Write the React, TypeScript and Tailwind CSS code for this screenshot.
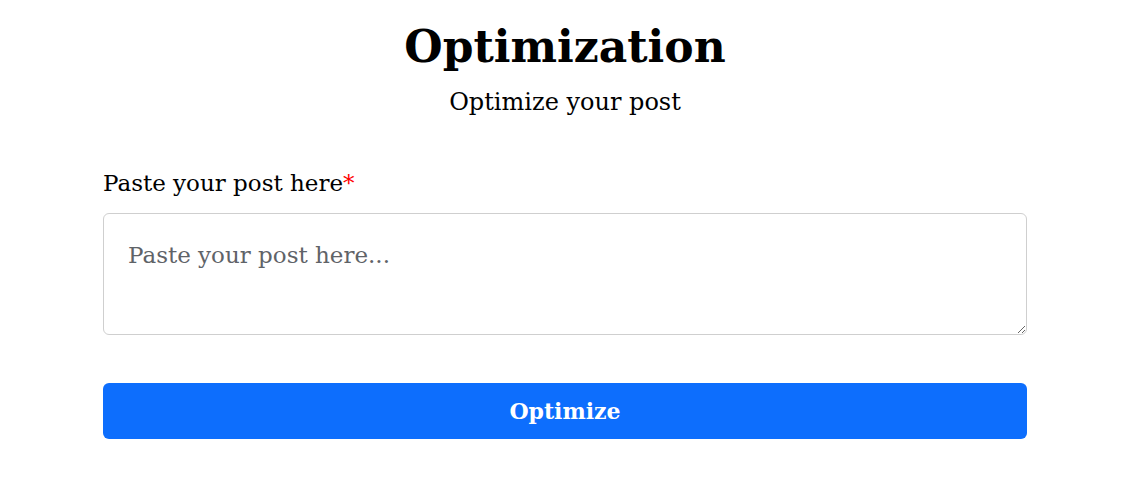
export default function App() {
  return (
    <div className="min-h-screen bg-white pl-[103px] pr-[99px] pt-[18px] font-['DejaVu_Serif',serif] text-black">
      <div className="flex flex-col items-center">
        <h1 className="text-[44px] font-bold leading-[58px]">Optimization</h1>
        <p className="mt-[12px] text-[24px] leading-[28px]">Optimize your post</p>
      </div>

      <form className="mt-[52px] flex flex-col" onSubmit={(e) => e.preventDefault()}>
        <label htmlFor="post" className="text-[23px] leading-[30px]">
          Paste your post here<span className="text-[#ff0000]">*</span>
        </label>
        <textarea
          id="post"
          placeholder="Paste your post here..."
          className="mt-[15px] h-[122px] w-full rounded-[6px] border border-[#cfcfcf] px-[24px] py-[27px] text-[23px] leading-[28px] outline-none placeholder:text-[#5f6368]"
        />
        <button
          type="submit"
          className="mt-[48px] h-[56px] w-full rounded-[6px] bg-[#0d6efd] text-[22px] font-bold text-white"
        >
          Optimize
        </button>
      </form>
    </div>
  );
}
